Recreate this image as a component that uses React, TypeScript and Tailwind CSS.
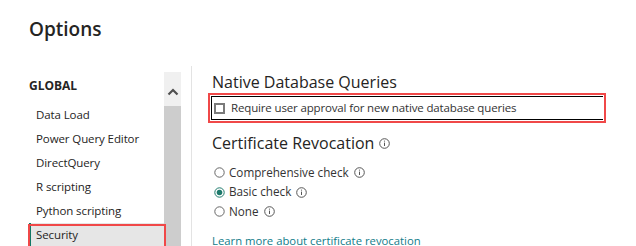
import React from 'react'

const font = { fontFamily: '"Open Sans", "Noto Sans", sans-serif' }

const InfoIcon = () => (
    <svg width="11" height="11" viewBox="0 0 11 11" className="inline-block">
        <circle cx="5.5" cy="5.5" r="4.8" fill="none" stroke="#555" strokeWidth="1" />
        <line x1="5.5" y1="4.6" x2="5.5" y2="8" stroke="#555" strokeWidth="1" />
        <circle cx="5.5" cy="3.1" r="0.6" fill="#555" />
    </svg>
)

const Radio = ({ checked }: { checked?: boolean }) => (
    <svg width="11" height="11" viewBox="0 0 11 11">
        <circle cx="5.5" cy="5.5" r="4.7" fill="#fff" stroke={checked ? '#1e7a6c' : '#666'} strokeWidth="1" />
        {checked && <circle cx="5.5" cy="5.5" r="2.8" fill="#1e7a6c" />}
    </svg>
)

const menu = ['Data Load', 'Power Query Editor', 'DirectQuery', 'R scripting', 'Python scripting']

export default function App() {
    return (
        <div className="w-[636px] h-[246px] overflow-hidden bg-white text-[#252423] flex flex-col" style={font}>
            <div className="h-[66px] shrink-0 pl-[29px] pt-[16px] text-[19px] leading-[26px] font-semibold">
                Options
            </div>
            <div className="flex flex-1">
                <div className="w-[191px] shrink-0 flex pl-[29px]">
                    <div className="w-[135px] flex flex-col text-[11.5px] tracking-[-0.1px]">
                        <div className="h-[37px] pt-[12px] text-[12px] tracking-normal leading-[16px] font-bold">GLOBAL</div>
                        {menu.map(m => (
                            <div key={m} className="h-[24px] leading-[24px] pl-[7px]">{m}</div>
                        ))}
                        <div className="relative h-[24px] leading-[24px] pl-[5px] bg-[#e6e6e6] border-l-2 border-[#117865]">
                            Security
                            <div className="absolute -left-[3px] -right-[2px] top-[1px] h-[26px] border-2 border-[#f04848]" />
                        </div>
                    </div>
                    <div className="w-[17px] mt-[6px] flex flex-col">
                        <div className="h-[34px] bg-[#f0f0f0] flex justify-center pt-[16px]">
                            <svg width="12" height="8" viewBox="0 0 12 8">
                                <polyline points="1.5,6.5 6,2 10.5,6.5" fill="none" stroke="#505050" strokeWidth="2.2" />
                            </svg>
                        </div>
                        <div className="flex-1 bg-[#cdcdcd]" />
                    </div>
                </div>
                <div className="flex-1 border-l border-[#e3e3e3] pl-[16px] flex flex-col">
                    <div className="mt-[5px] h-[22px] leading-[22px] pl-[4px] text-[16px]">Native Database Queries</div>
                    <div className="w-[398px] h-[30px] border-2 border-[#f04848] shrink-0">
                        <div className="m-[1px] h-[24px] border-l border-y border-black flex items-center">
                            <div className="ml-[2px] w-[11px] h-[11px] border-2 border-[#7a7a7a]" />
                            <span className="ml-[6px] text-[11.5px] tracking-[-0.15px] text-[#333]">Require user approval for new native database queries</span>
                        </div>
                    </div>
                    <div className="mt-[9px] h-[22px] leading-[22px] pl-[4px] text-[16px] flex items-center gap-[5px]">
                        Certificate Revocation <InfoIcon />
                    </div>
                    <div className="mt-[9px] pl-[6px] text-[11.7px] text-[#333]">
                        {[['Comprehensive check', false], ['Basic check', true], ['None', false]].map(([l, c]) => (
                            <div key={l as string} className="h-[19.5px] flex items-center gap-[4px]">
                                <Radio checked={c as boolean} />
                                <span>{l as string}</span>
                                <span className="ml-[1px] flex"><InfoIcon /></span>
                            </div>
                        ))}
                    </div>
                    <div className="mt-[9px] pl-[4px] h-[20px] leading-[20px] text-[11.3px] text-[#117c8a]">
                        Learn more about certificate revocation
                    </div>
                </div>
            </div>
        </div>
    )
}
